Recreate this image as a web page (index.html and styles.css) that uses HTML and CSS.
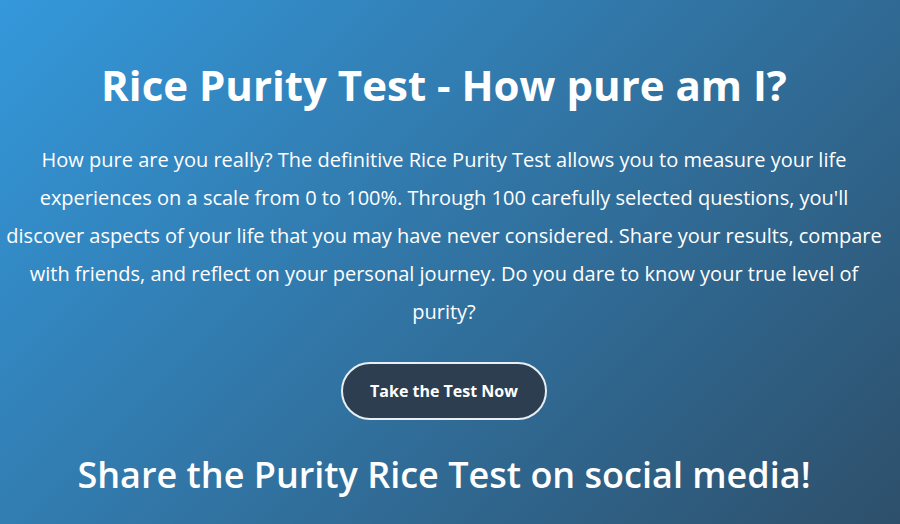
FILE: index.html
```html
<!DOCTYPE html>
<html lang="en">
<head>
<meta charset="utf-8">
<title>Rice Purity Test - How pure am I?</title>
<link rel="stylesheet" href="styles.css">
</head>
<body>
<main class="page">
  <section class="hero">
    <h1 class="hero-title">Rice Purity Test - How pure am I?</h1>
    <p class="hero-text">How pure are you really? The definitive Rice Purity Test allows you to measure your life experiences on a scale from 0 to 100%. Through 100 carefully selected questions, you'll discover aspects of your life that you may have never considered. Share your results, compare with friends, and reflect on your personal journey. Do you dare to know your true level of purity?</p>
    <a class="cta" href="#test">Take the Test Now</a>
  </section>
  <section class="share">
    <h2 class="share-title">Share the Purity Rice Test on social media!</h2>
  </section>
</main>
</body>
</html>
```

FILE: styles.css
```css
html, body {
  margin: 0;
  padding: 0;
}

body {
  min-height: 100vh;
  background: linear-gradient(135deg, #3498db 0%, #2c3e50 100%) no-repeat;
  background-size: 100% 865px;
  background-color: #2c3e50;
  color: #ffffff;
  font-family: "Open Sans", "Noto Sans", sans-serif;
  overflow: hidden;
}

.page {
  width: 888px;
  box-sizing: border-box;
  padding: 0 6px;
}

.hero {
  display: flex;
  flex-direction: column;
  align-items: center;
  text-align: center;
  padding-top: 61px;
}

.hero-title {
  margin: 0;
  font-size: 42px;
  line-height: 48px;
  font-weight: 700;
}

.hero-text {
  margin: 32px 0 0;
  font-size: 20px;
  line-height: 38px;
  font-weight: 400;
}

.cta {
  margin-top: 31px;
  display: inline-block;
  box-sizing: border-box;
  width: 206px;
  height: 58px;
  line-height: 54px;
  border: 2px solid #e8eef3;
  border-radius: 29px;
  background: #2c3e50;
  color: #ffffff;
  text-decoration: none;
  font-size: 16px;
  font-weight: 700;
  text-align: center;
}

.share {
  text-align: center;
  padding-top: 32px;
}

.share-title {
  margin: 0;
  font-size: 36px;
  line-height: 46px;
  font-weight: 600;
}
```
